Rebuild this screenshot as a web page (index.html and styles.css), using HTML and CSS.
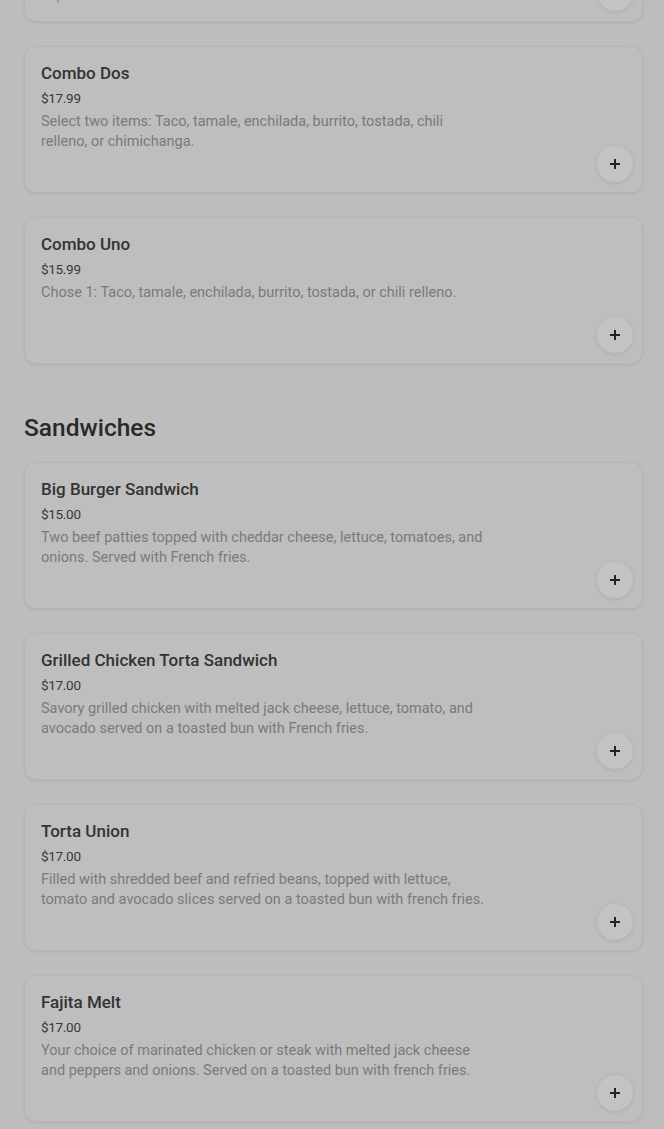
FILE: index.html
```html
<!DOCTYPE html>
<html>
<head>
<meta charset="utf-8">
<link rel="stylesheet" href="styles.css">
</head>
<body>
<main class="menu">
  <section class="section">
    <article class="card">
      <div class="info">
        <h3 class="title">Combo Tres</h3>
        <div class="price">$19.99</div>
        <p class="desc">Select three items: Taco, tamale, enchilada, burrito, tostada, chili relleno, or chimichanga.</p>
        <div class="tag">Popular</div>
      </div>
      <button class="add" aria-label="Add"><svg viewBox="0 0 12 12" width="12" height="12"><path d="M6 1v10M1 6h10" stroke="currentColor" stroke-width="2" fill="none"/></svg></button>
    </article>
    <article class="card">
      <div class="info">
        <h3 class="title">Combo Dos</h3>
        <div class="price">$17.99</div>
        <p class="desc">Select two items: Taco, tamale, enchilada, burrito, tostada, chili relleno, or chimichanga.</p>
      </div>
      <button class="add" aria-label="Add"><svg viewBox="0 0 12 12" width="12" height="12"><path d="M6 1v10M1 6h10" stroke="currentColor" stroke-width="2" fill="none"/></svg></button>
    </article>
    <article class="card">
      <div class="info">
        <h3 class="title">Combo Uno</h3>
        <div class="price">$15.99</div>
        <p class="desc">Chose 1: Taco, tamale, enchilada, burrito, tostada, or chili relleno.</p>
      </div>
      <button class="add" aria-label="Add"><svg viewBox="0 0 12 12" width="12" height="12"><path d="M6 1v10M1 6h10" stroke="currentColor" stroke-width="2" fill="none"/></svg></button>
    </article>
  </section>
  <section class="section">
    <h2 class="heading">Sandwiches</h2>
    <article class="card">
      <div class="info">
        <h3 class="title">Big Burger Sandwich</h3>
        <div class="price">$15.00</div>
        <p class="desc">Two beef patties topped with cheddar cheese, lettuce, tomatoes, and onions. Served with French fries.</p>
      </div>
      <button class="add" aria-label="Add"><svg viewBox="0 0 12 12" width="12" height="12"><path d="M6 1v10M1 6h10" stroke="currentColor" stroke-width="2" fill="none"/></svg></button>
    </article>
    <article class="card">
      <div class="info">
        <h3 class="title">Grilled Chicken Torta Sandwich</h3>
        <div class="price">$17.00</div>
        <p class="desc">Savory grilled chicken with melted jack cheese, lettuce, tomato, and avocado served on a toasted bun with French fries.</p>
      </div>
      <button class="add" aria-label="Add"><svg viewBox="0 0 12 12" width="12" height="12"><path d="M6 1v10M1 6h10" stroke="currentColor" stroke-width="2" fill="none"/></svg></button>
    </article>
    <article class="card">
      <div class="info">
        <h3 class="title">Torta Union</h3>
        <div class="price">$17.00</div>
        <p class="desc">Filled with shredded beef and refried beans, topped with lettuce, tomato and avocado slices served on a toasted bun with french fries.</p>
      </div>
      <button class="add" aria-label="Add"><svg viewBox="0 0 12 12" width="12" height="12"><path d="M6 1v10M1 6h10" stroke="currentColor" stroke-width="2" fill="none"/></svg></button>
    </article>
    <article class="card">
      <div class="info">
        <h3 class="title">Fajita Melt</h3>
        <div class="price">$17.00</div>
        <p class="desc">Your choice of marinated chicken or steak with melted jack cheese and peppers and onions. Served on a toasted bun with french fries.</p>
      </div>
      <button class="add" aria-label="Add"><svg viewBox="0 0 12 12" width="12" height="12"><path d="M6 1v10M1 6h10" stroke="currentColor" stroke-width="2" fill="none"/></svg></button>
    </article>
  </section>
</main>
</body>
</html>
```
FILE: styles.css
```css
* { box-sizing: border-box; }
html, body { margin: 0; padding: 0; }
body {
  background: #bdbdbd;
  font-family: Roboto, "Noto Sans", sans-serif;
  color: #2b2b2b;
  overflow: hidden;
  height: 1129px;
}
.menu {
  margin-top: -125px;
  padding: 0 21px 0 24px;
}
.section {
  display: flex;
  flex-direction: column;
  gap: 24px;
}
.heading {
  margin: 48px 0 -6px;
  font-size: 24.5px;
  line-height: 32px;
  font-weight: 500;
  color: #2a2a2a;
}
.card {
  display: flex;
  justify-content: space-between;
  min-height: 147px;
  padding: 16px 9px 10px 16px;
  border: 1px solid #b6b6b6;
  border-radius: 12px;
  background: #bebebe;
  box-shadow: 0 1px 3px rgba(0,0,0,0.07);
}
.info {
  flex: 0 1 450px;
  display: flex;
  flex-direction: column;
}
.title {
  margin: 0;
  font-size: 17px;
  line-height: 20px;
  font-weight: 500;
  color: #333;
}
.price {
  margin-top: 5px;
  font-size: 13.5px;
  line-height: 20px;
  letter-spacing: -0.3px;
  color: #383838;
}
.desc {
  margin: 4px 0 0;
  font-size: 14.5px;
  line-height: 20px;
  color: #7a7a7a;
}
.tag {
  margin-top: auto;
  font-size: 13px;
  line-height: 16px;
  color: #6f9a86;
  position: relative;
  top: -7px;
}
.add {
  align-self: flex-end;
  flex: none;
  width: 36px;
  height: 36px;
  border: none;
  border-radius: 50%;
  background: #c3c3c3;
  box-shadow: 0 1px 4px rgba(0,0,0,0.1);
  color: #222;
  display: flex;
  align-items: center;
  justify-content: center;
  padding: 0;
}
```
